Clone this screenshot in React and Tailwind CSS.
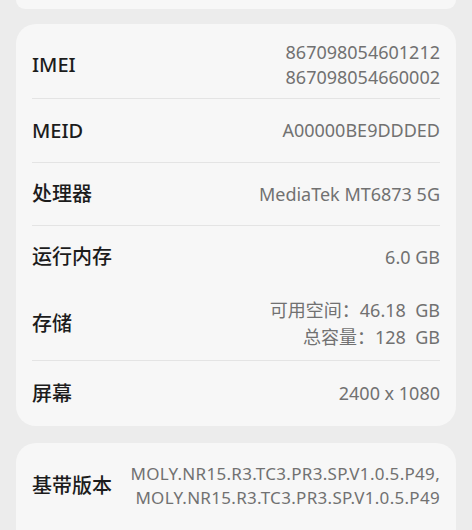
import React from 'react';

const font = { fontFamily: '"Noto Sans", "Noto Sans CJK SC", sans-serif' };

function Row({ label, children, h, divider = true }) {
    return (
        <div className={`flex items-center justify-between ${h} ${divider ? 'border-b border-[#e4e4e4]' : ''}`}>
            <span className="text-[20px] font-medium text-[#1c1c1c] whitespace-nowrap">{label}</span>
            <div className="text-right text-[18px] leading-[25px] text-[#717171] whitespace-nowrap">{children}</div>
        </div>
    );
}

export default function App() {
    return (
        <div className="h-[530px] overflow-hidden bg-[#ececec] px-4" style={font}>
            {/* tail of the card above */}
            <div className="h-[9px] bg-[#f7f7f7] rounded-b-[20px]"></div>

            <div className="mt-[15px] bg-[#f7f7f7] rounded-[20px] px-4 pt-[8px]">
                <Row label="IMEI" h="h-[67px]">
                    <div>867098054601212</div>
                    <div>867098054660002</div>
                </Row>
                <Row label="MEID" h="h-[64px]">A00000BE9DDDED</Row>
                <Row label="处理器" h="h-[63px]">MediaTek MT6873 5G</Row>
                <Row label="运行内存" h="h-[62px]" divider={false}>6.0 GB</Row>
                <Row label="存储" h="h-[73px]">
                    <div className="leading-[27px]">可用空间：46.18&nbsp; GB</div>
                    <div className="leading-[27px]">总容量：128&nbsp; GB</div>
                </Row>
                <Row label="屏幕" h="h-[65px]" divider={false}>2400 x 1080</Row>
            </div>

            <div className="mt-[17px] bg-[#f7f7f7] rounded-[20px] px-4 pt-[19px] pb-[40px]">
                <div className="flex items-center justify-between">
                    <span className="text-[20px] font-medium text-[#1c1c1c] whitespace-nowrap">基带版本</span>
                    <div className="text-right text-[17px] leading-[24px] text-[#717171] whitespace-nowrap tracking-[0.3px]">
                        <div>MOLY.NR15.R3.TC3.PR3.SP.V1.0.5.P49,</div>
                        <div>MOLY.NR15.R3.TC3.PR3.SP.V1.0.5.P49</div>
                    </div>
                </div>
            </div>
        </div>
    );
}
